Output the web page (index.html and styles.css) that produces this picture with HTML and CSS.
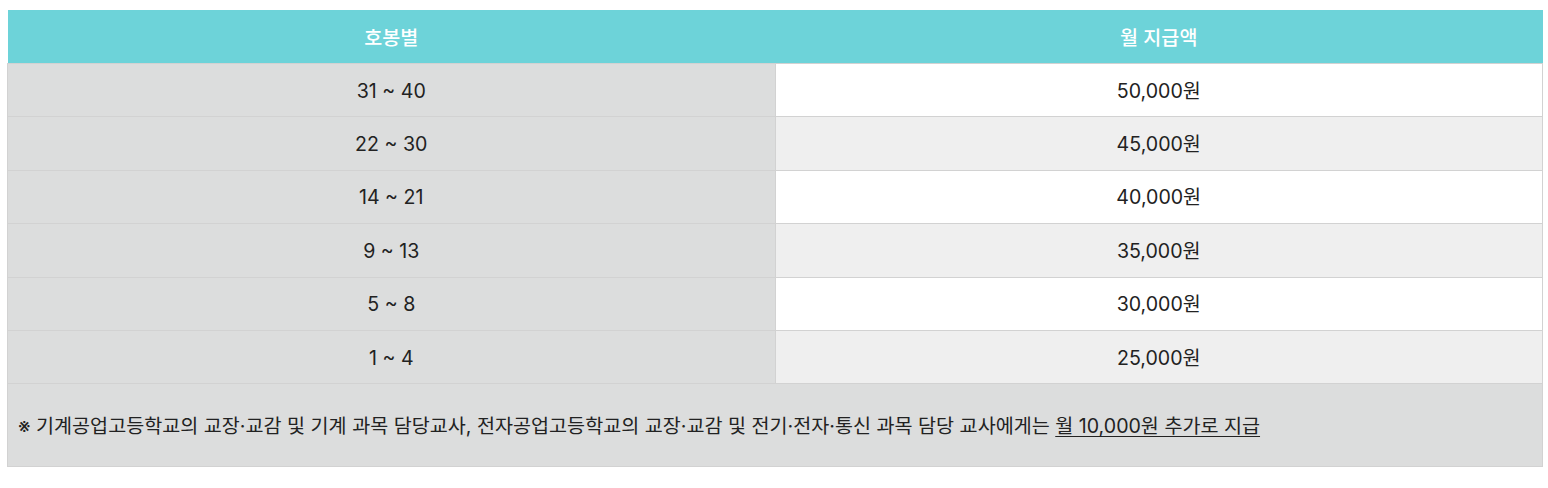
FILE: index.html
```html
<!DOCTYPE html>
<html lang="ko">
<head>
<meta charset="utf-8">
<link rel="stylesheet" href="styles.css">
</head>
<body>
<table class="pay">
  <thead>
    <tr><th>호봉별</th><th>월 지급액</th></tr>
  </thead>
  <tbody>
    <tr><td class="grade">31 ~ 40</td><td class="amt">50,000원</td></tr>
    <tr class="alt"><td class="grade">22 ~ 30</td><td class="amt">45,000원</td></tr>
    <tr><td class="grade">14 ~ 21</td><td class="amt">40,000원</td></tr>
    <tr class="alt"><td class="grade">9 ~ 13</td><td class="amt">35,000원</td></tr>
    <tr><td class="grade">5 ~ 8</td><td class="amt">30,000원</td></tr>
    <tr class="alt"><td class="grade">1 ~ 4</td><td class="amt">25,000원</td></tr>
    <tr><td class="note" colspan="2">※ 기계공업고등학교의 교장·교감 및 기계 과목 담당교사, 전자공업고등학교의 교장·교감 및 전기·전자·통신 과목 담당 교사에게는 <u>월 10,000원 추가로 지급</u></td></tr>
  </tbody>
</table>
</body>
</html>
```
FILE: styles.css
```css
html, body { margin: 0; padding: 0; background: #fff; }
body { padding: 10px 5px 0 7px; font-family: Inter, "Noto Sans CJK KR", sans-serif; color: #222; }
.pay { width: 1536px; border-collapse: collapse; table-layout: fixed; font-size: 19.6px; }
.pay th { background: #6dd3d9; color: #fff; font-weight: 500; height: 53px; padding: 0; text-align: center; }
.pay td { height: 53.4px; padding: 1px 0 0; box-sizing: border-box; text-align: center; border: 1px solid #d2d2d2; line-height: 24px; }
.pay td.grade { background: #dcdddd; }
.pay td.amt { background: #fff; }
.pay tr.alt td.amt { background: #efefef; }
.pay td.note { background: #dcdddd; text-align: left; padding: 2px 10px 0; height: 83px; }
.pay td.note u { text-underline-offset: 3px; }
```
